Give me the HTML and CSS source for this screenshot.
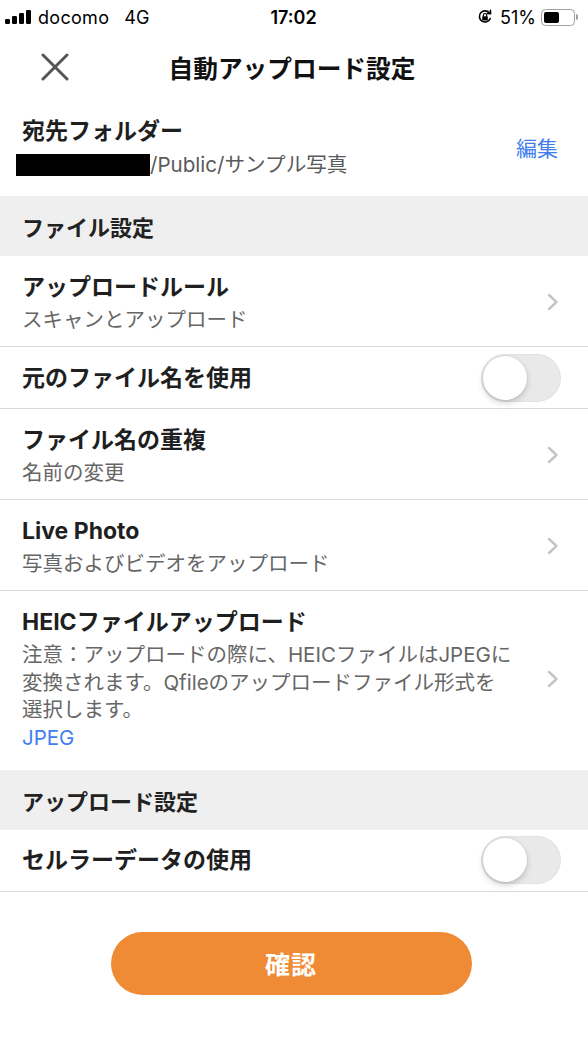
FILE: index.html
```html
<!DOCTYPE html>
<html lang="ja">
<head>
<meta charset="utf-8">
<title>自動アップロード設定</title>
<link rel="stylesheet" href="styles.css">
</head>
<body>
<div class="screen">
  <div class="status">
    <div class="status-left">
      <svg class="signal" width="27" height="14" viewBox="0 0 27 14">
        <rect x="0" y="9" width="5" height="5" rx="1.2"/>
        <rect x="7" y="6" width="5" height="8" rx="1.2"/>
        <rect x="14" y="3" width="5" height="11" rx="1.2"/>
        <rect x="21" y="0" width="5" height="14" rx="1.2"/>
      </svg>
      <span class="carrier">docomo</span>
      <span class="net">4G</span>
    </div>
    <div class="time">17:02</div>
    <div class="status-right">
      <svg class="lock" width="16" height="16" viewBox="0 0 16 16">
        <path d="M13.2 9.6A5.6 5.6 0 1 1 12.6 4.2" fill="none" stroke="#000" stroke-width="1.6" stroke-linecap="round"/>
        <path d="M10.4 4.4 L13.6 4.6 L13.4 1.4" fill="none" stroke="#000" stroke-width="1.6" stroke-linecap="round" stroke-linejoin="round"/>
        <rect x="5.2" y="7.2" width="5.6" height="4.4" rx="0.8"/>
        <path d="M6.3 7.4V6.2a1.7 1.7 0 0 1 3.4 0v1.2" fill="none" stroke="#000" stroke-width="1.2"/>
      </svg>
      <span class="pct">51%</span>
      <div class="battery"><div class="battery-fill"></div></div>
      <div class="battery-nub"></div>
    </div>
  </div>

  <div class="header">
    <svg class="close" width="28" height="28" viewBox="0 0 28 28">
      <path d="M2 2 L26 26 M26 2 L2 26" stroke="#555" stroke-width="3" stroke-linecap="round"/>
    </svg>
    <div class="title">自動アップロード設定</div>
    <div class="header-spacer"></div>
  </div>

  <div class="dest">
    <div class="dest-text">
      <div class="item-title">宛先フォルダー</div>
      <div class="dest-path"><span class="redact"></span>/Public/サンプル写真</div>
    </div>
    <div class="edit">編集</div>
  </div>

  <div class="section">ファイル設定</div>

  <div class="row">
    <div class="row-text">
      <div class="item-title">アップロードルール</div>
      <div class="item-sub">スキャンとアップロード</div>
    </div>
    <svg class="chev" width="12" height="18" viewBox="0 0 12 18"><path d="M2 2 L9.5 9 L2 16" fill="none" stroke="#c4c4c7" stroke-width="2.4" stroke-linecap="round" stroke-linejoin="round"/></svg>
  </div>

  <div class="row single">
    <div class="item-title">元のファイル名を使用</div>
    <div class="toggle"><div class="knob"></div></div>
  </div>

  <div class="row">
    <div class="row-text">
      <div class="item-title">ファイル名の重複</div>
      <div class="item-sub">名前の変更</div>
    </div>
    <svg class="chev" width="12" height="18" viewBox="0 0 12 18"><path d="M2 2 L9.5 9 L2 16" fill="none" stroke="#c4c4c7" stroke-width="2.4" stroke-linecap="round" stroke-linejoin="round"/></svg>
  </div>

  <div class="row">
    <div class="row-text">
      <div class="item-title">Live Photo</div>
      <div class="item-sub">写真およびビデオをアップロード</div>
    </div>
    <svg class="chev" width="12" height="18" viewBox="0 0 12 18"><path d="M2 2 L9.5 9 L2 16" fill="none" stroke="#c4c4c7" stroke-width="2.4" stroke-linecap="round" stroke-linejoin="round"/></svg>
  </div>

  <div class="row heic">
    <div class="row-text">
      <div class="item-title">HEICファイルアップロード</div>
      <div class="item-sub desc">注意：アップロードの際に、HEICファイルはJPEGに<br>変換されます。Qfileのアップロードファイル形式を<br>選択します。</div>
      <div class="item-sub value">JPEG</div>
    </div>
    <svg class="chev" width="12" height="18" viewBox="0 0 12 18"><path d="M2 2 L9.5 9 L2 16" fill="none" stroke="#c4c4c7" stroke-width="2.4" stroke-linecap="round" stroke-linejoin="round"/></svg>
  </div>

  <div class="section">アップロード設定</div>

  <div class="row single last">
    <div class="item-title">セルラーデータの使用</div>
    <div class="toggle"><div class="knob"></div></div>
  </div>

  <div class="footer">
    <button class="confirm">確認</button>
  </div>
</div>
</body>
</html>
```

FILE: styles.css
```css
* { box-sizing: border-box; }

html, body {
  margin: 0;
  padding: 0;
  background: #ffffff;
}

body {
  font-family: "Inter", "Noto Sans CJK JP", sans-serif;
  color: #1f1f1f;
}

.screen {
  width: 588px;
  min-height: 1042px;
  display: flex;
  flex-direction: column;
}

/* status bar */
.status {
  height: 34px;
  display: grid;
  grid-template-columns: 1fr auto 1fr;
  align-items: center;
  padding: 0 10px 0 5px;
  font-size: 18px;
  color: #000;
}

.status-left {
  display: flex;
  align-items: center;
}

.signal { fill: #000; margin-right: 6px; }
.carrier { margin-right: 15px; letter-spacing: 0.3px; }

.time {
  font-weight: 600;
  text-align: center;
  padding-left: 4px;
}

.status-right {
  display: flex;
  align-items: center;
  justify-content: flex-end;
}

.lock { margin-right: 7px; fill: #000; }
.pct { margin-right: 5px; }

.battery {
  width: 34px;
  height: 17px;
  border: 1.3px solid #a0a0a0;
  border-radius: 4.5px;
  padding: 2px;
  display: flex;
}

.battery-fill {
  width: 15px;
  height: 100%;
  background: #000;
  border-radius: 2px;
}

.battery-nub {
  width: 2px;
  height: 6px;
  background: #a0a0a0;
  border-radius: 0 2px 2px 0;
  margin-left: 1px;
}

/* header */
.header {
  height: 66px;
  display: grid;
  grid-template-columns: 100px 1fr 100px;
  align-items: center;
}

.close { margin-left: 41px; }

.title {
  text-align: center;
  font-size: 24.7px;
  font-weight: 700;
  color: #111;
  padding-right: 4px;
}

/* destination */
.dest {
  height: 96px;
  display: flex;
  align-items: center;
  justify-content: space-between;
  padding: 0 30px 0 22px;
}

.item-title {
  font-size: 23px;
  font-weight: 700;
  line-height: 32px;
  color: #1f1f1f;
}

.dest-path {
  font-size: 20.6px;
  line-height: 32px;
  margin-top: 2px;
  color: #5a5a5a;
  display: flex;
  align-items: center;
}

.redact {
  display: inline-block;
  width: 134px;
  height: 22px;
  background: #000;
  margin-left: -6px;
}

.edit {
  font-size: 21px;
  color: #3f7ef0;
  padding-bottom: 2px;
}

/* section header */
.section {
  height: 60px;
  background: #efefef;
  display: flex;
  align-items: center;
  padding-left: 22px;
  font-size: 22px;
  font-weight: 700;
  color: #222;
}

/* rows */
.row {
  display: flex;
  align-items: center;
  justify-content: space-between;
  padding: 15px 29px 13px 22px;
  border-bottom: 1px solid #dadada;
}

.row.single {
  height: 62px;
  padding-top: 0;
  padding-bottom: 0;
  padding-right: 27px;
}

.row.heic { border-bottom: none; padding-bottom: 18px; }

.item-sub {
  font-size: 20.5px;
  line-height: 27px;
  margin-top: 3px;
  color: #666;
}

.desc {
  line-height: 27.5px;
}

.value {
  margin-top: 0;
  line-height: 28px;
  color: #3f7ef0;
}

.chev { flex: none; }

/* toggle */
.toggle {
  width: 80px;
  height: 48px;
  border-radius: 24px;
  background: #e9e9ea;
  border: 1px solid #e2e2e2;
  padding: 1px;
  display: flex;
  align-items: center;
}

.knob {
  width: 44px;
  height: 44px;
  border-radius: 50%;
  background: #fff;
  box-shadow: 0 3px 6px rgba(0, 0, 0, 0.18), 0 0 0 1px rgba(0, 0, 0, 0.04);
}

/* footer */
.footer {
  display: flex;
  justify-content: center;
  padding: 40px 6px 0 0;
}

.confirm {
  width: 361px;
  height: 63px;
  border: none;
  border-radius: 32px;
  background: #f08b35;
  color: #fff;
  font-family: "Noto Sans CJK JP", sans-serif;
  font-size: 25px;
  font-weight: 700;
  letter-spacing: 1px;
}
```
